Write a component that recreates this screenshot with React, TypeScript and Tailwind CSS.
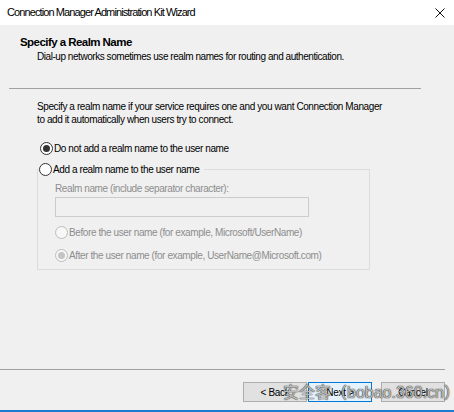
import React from "react";

const font = { fontFamily: '"Liberation Sans", Arial, sans-serif' };

function Radio({ checked = false, disabled = false }: { checked?: boolean; disabled?: boolean }) {
  return (
    <span
      className={`flex h-[13px] w-[13px] flex-none items-center justify-center rounded-full border ${
        disabled ? "border-[#bcbcbc] bg-[#f7f7f7]" : "border-[#333] bg-white"
      }`}
    >
      {checked && (
        <span className={`h-[7px] w-[7px] rounded-full ${disabled ? "bg-[#c4c4c4]" : "bg-[#333]"}`} />
      )}
    </span>
  );
}

function Button({ label, focused = false }: { label: string; focused?: boolean }) {
  return (
    <button
      className={`flex h-[20px] w-[64px] items-center justify-center border text-[10px] tracking-[-0.3px] text-black ${
        focused ? "border-[#0078d7] bg-[#e5f1fb]" : "border-[#adadad] bg-[#e1e1e1]"
      }`}
    >
      {label}
    </button>
  );
}

export default function App() {
  return (
    <div className="relative flex h-[412px] w-[454px] flex-col overflow-hidden bg-[#f0f0f0] text-black" style={font}>
      {/* title bar */}
      <div className="flex h-[25px] flex-none items-center justify-between bg-white pl-[7px] pr-[9px]">
        <span className="text-[11px] tracking-[-0.9px]">Connection Manager Administration Kit Wizard</span>
        <svg viewBox="0 0 10 10" className="h-[10px] w-[10px]" aria-hidden="true">
          <path d="M0.5 0.5l9 9M9.5 0.5l-9 9" stroke="#111" strokeWidth="1" />
        </svg>
      </div>

      {/* header */}
      <div className="pl-[20px] pt-[10px]">
        <div className="text-[11.5px] font-bold leading-[15px] tracking-[-0.55px]">Specify a Realm Name</div>
        <div className="pl-[17px] text-[10px] leading-[14px] tracking-[-0.45px]">
          Dial-up networks sometimes use realm names for routing and authentication.
        </div>
      </div>
      <div className="ml-[9px] mt-[24px] h-px w-[412px] bg-[#a0a0a0]" />

      {/* body */}
      <div className="pl-[37px] pt-[11px] text-[10px] tracking-[-0.4px]">
        <p className="leading-[13px]">
          Specify a realm name if your service requires one and you want Connection Manager
          <br />
          to add it automatically when users try to connect.
        </p>

        <div className="ml-[3px] mt-[15px] flex h-[14px] items-center gap-[1px]">
          <Radio checked />
          <span>Do not add a realm name to the user name</span>
        </div>

        <fieldset className="mt-[7px] w-[333px] border border-[#dcdcdc] pb-[7px]">
          <legend className="ml-[1px] flex h-[14px] items-center gap-[1px] pr-[5px]">
            <Radio />
            <span>Add a realm name to the user name</span>
          </legend>
          <div className="pl-[17px] text-[#8d8d8d]">
            <div className="mt-[6px] leading-[14px]">Realm name (include separator character):</div>
            <div className="mt-[1px] h-[20px] w-[254px] border border-[#cccccc] bg-[#f0f0f0]" />
            <div className="mt-[8px] flex h-[14px] items-center gap-[1px]">
              <Radio disabled />
              <span>Before the user name (for example, Microsoft/UserName)</span>
            </div>
            <div className="mt-[9px] flex h-[14px] items-center gap-[1px]">
              <Radio checked disabled />
              <span>After the user name (for example, UserName@Microsoft.com)</span>
            </div>
          </div>
        </fieldset>
      </div>

      {/* footer */}
      <div className="mt-auto">
        <div className="h-px w-[445px] bg-[#a0a0a0]" />
        <div className="flex justify-end pr-[9px] pt-[12px]">
          <div className="flex gap-[1px]">
            <Button label="< Back" />
            <Button label="Next >" focused />
          </div>
          <div className="ml-[9px]">
            <Button label="Cancel" />
          </div>
        </div>
        <div className="mt-[8px] h-[2px] bg-[#1f7ad1]" />
      </div>

      {/* watermark */}
      <div
        className="pointer-events-none absolute left-[283px] top-[382px] whitespace-nowrap text-[16px] leading-[22px] text-white/70 [text-shadow:0_0_1px_#222,0_0_1px_#222]"
        style={{ fontFamily: '"Liberation Sans", "Noto Sans CJK SC", sans-serif' }}
      >
        安全客（bobao.360.cn）
      </div>
    </div>
  );
}
